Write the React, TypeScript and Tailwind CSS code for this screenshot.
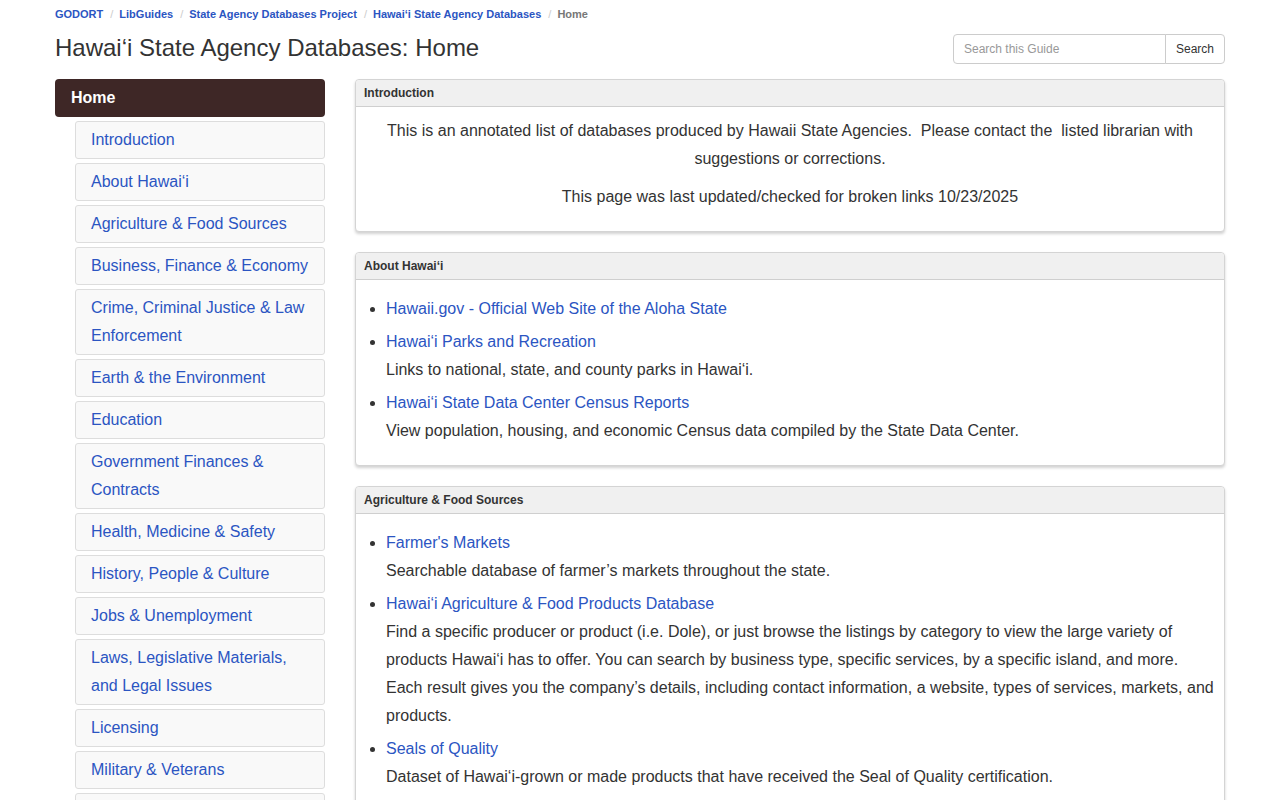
const navItems = [
  'Introduction',
  'About Hawai‘i',
  'Agriculture & Food Sources',
  'Business, Finance & Economy',
  'Crime, Criminal Justice & Law Enforcement',
  'Earth & the Environment',
  'Education',
  'Government Finances & Contracts',
  'Health, Medicine & Safety',
  'History, People & Culture',
  'Jobs & Unemployment',
  'Laws, Legislative Materials, and Legal Issues',
  'Licensing',
  'Military & Veterans',
  'Natural Resources',
];

const crumbs = ['GODORT', 'LibGuides', 'State Agency Databases Project', 'Hawai‘i State Agency Databases'];

interface Resource {
  title: string;
  desc?: string;
}

const about: Resource[] = [
  { title: 'Hawaii.gov - Official Web Site of the Aloha State' },
  { title: 'Hawai‘i Parks and Recreation', desc: 'Links to national, state, and county parks in Hawai‘i.' },
  {
    title: 'Hawai‘i State Data Center Census Reports',
    desc: 'View population, housing, and economic Census data compiled by the State Data Center.',
  },
];

const agriculture: Resource[] = [
  { title: "Farmer's Markets", desc: 'Searchable database of farmer’s markets throughout the state.' },
  {
    title: 'Hawai‘i Agriculture & Food Products Database',
    desc: 'Find a specific producer or product (i.e. Dole), or just browse the listings by category to view the large variety of products Hawai‘i has to offer. You can search by business type, specific services, by a specific island, and more. Each result gives you the company’s details, including contact information, a website, types of services, markets, and products.',
  },
  {
    title: 'Seals of Quality',
    desc: 'Dataset of Hawai‘i-grown or made products that have received the Seal of Quality certification.',
  },
  { title: 'Hawai‘i Department of Agriculture', desc: 'Information on programs, plant and animal quarantine, and more.' },
];

function Panel({ title, children }: { title: string; children: React.ReactNode }) {
  return (
    <div className="mb-5 rounded border border-[#d4d4d4] bg-white shadow-[0_2px_3px_rgba(0,0,0,0.18)]">
      <div className="flex h-[27px] items-center rounded-t border-b border-[#cfcfcf] bg-[#f0f0f0] px-2 text-[12px] font-bold text-[#333]">
        {title}
      </div>
      <div className="p-[10px]">{children}</div>
    </div>
  );
}

function ResourceList({ items }: { items: Resource[] }) {
  return (
    <ul className="mb-[10px] mt-[5px] list-disc pl-5">
      {items.map((r) => (
        <li key={r.title} className="mb-[5px] text-[16px] leading-[28px] text-[#333]">
          <a href="#" className="text-[#2b55c2] hover:underline">
            {r.title}
          </a>
          {r.desc && <div>{r.desc}</div>}
        </li>
      ))}
    </ul>
  );
}

export default function App() {
  return (
    <div className="min-h-screen bg-white font-['Liberation_Sans',Arial,sans-serif] text-[#333]">
      <div className="mx-auto w-[1170px]">
        <nav className="flex items-center pt-[8px] text-[11px] font-bold leading-[13px]">
          {crumbs.map((c) => (
            <span key={c} className="flex items-center">
              <a href="#" className="text-[#2b55c2]">
                {c}
              </a>
              <span className="pl-[7px] pr-[6px] font-normal text-[#ccc]">/</span>
            </span>
          ))}
          <span className="text-[#777]">Home</span>
        </nav>

        <div className="mt-[13px] flex items-start justify-between">
          <h1 className="text-[24px] leading-[28px] text-[#333]">Hawai‘i State Agency Databases: Home</h1>
          <div className="flex h-[30px] text-[12px]">
            <input
              className="w-[213px] rounded-l border border-[#ccc] px-[10px] text-[#555] placeholder:text-[#999] outline-none"
              placeholder="Search this Guide"
            />
            <button className="-ml-px w-[60px] rounded-r border border-[#ccc] bg-white text-[#333]">Search</button>
          </div>
        </div>

        <div className="mt-[15px] flex gap-[30px]">
          <aside className="w-[270px] shrink-0">
            <div className="mb-1 flex h-[38px] items-center rounded bg-[#3e2726] px-4 text-[16px] font-bold text-white">
              Home
            </div>
            <div className="ml-5 flex flex-col gap-1">
              {navItems.map((n) => (
                <a
                  key={n}
                  href="#"
                  className="rounded-[3px] border border-[#ddd] bg-[#f9f9f9] py-1 pl-[15px] pr-[14px] text-[16px] leading-[28px] text-[#2b55c2]"
                >
                  {n}
                </a>
              ))}
            </div>
          </aside>

          <main className="w-[870px]">
            <Panel title="Introduction">
              <p className="mb-[10px] text-center text-[16px] leading-[28px]">
                This is an annotated list of databases produced by Hawaii State Agencies.&nbsp; Please contact the&nbsp; listed
                librarian with suggestions or corrections.
              </p>
              <p className="mb-[10px] text-center text-[16px] leading-[28px]">
                This page was last updated/checked for broken links 10/23/2025
              </p>
            </Panel>
            <Panel title="About Hawai‘i">
              <ResourceList items={about} />
            </Panel>
            <Panel title="Agriculture & Food Sources">
              <ResourceList items={agriculture} />
            </Panel>
          </main>
        </div>
      </div>
    </div>
  );
}
